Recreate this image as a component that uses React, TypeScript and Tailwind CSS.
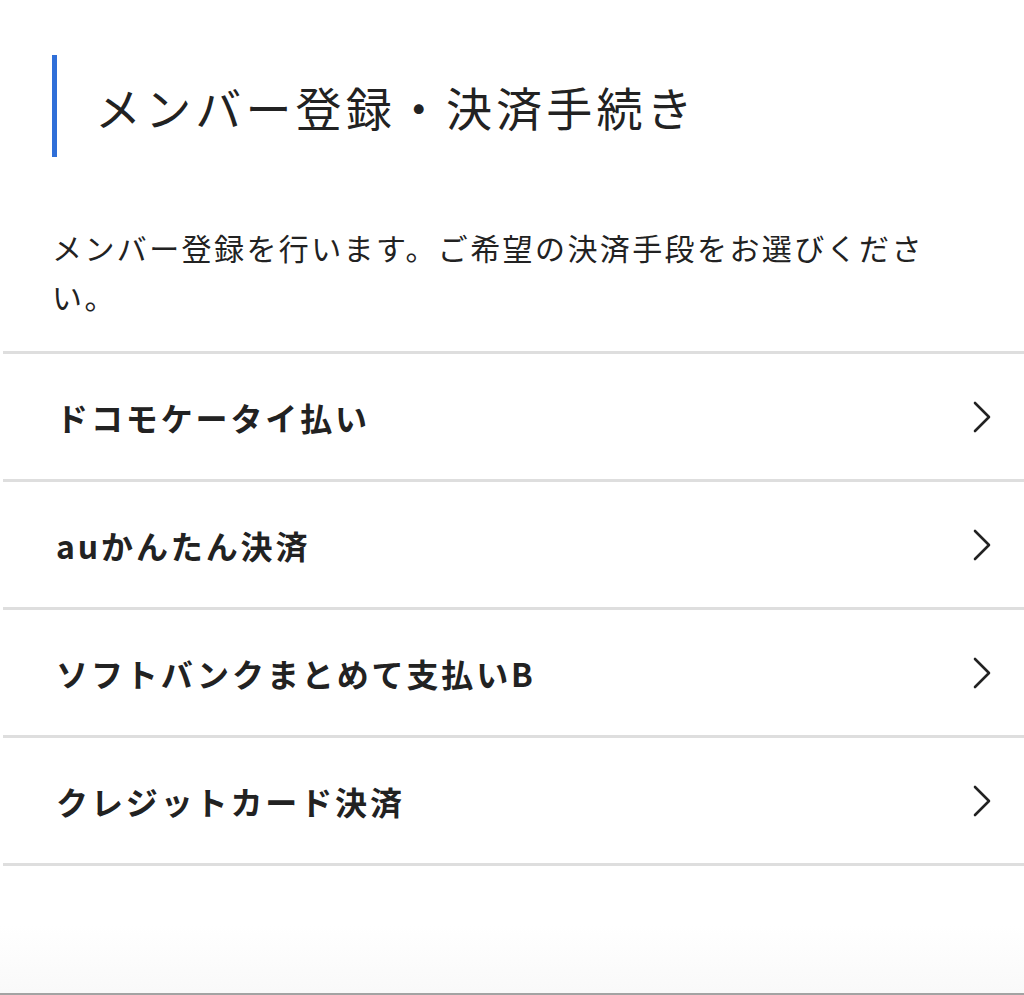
const methods = [
  "ドコモケータイ払い",
  "auかんたん決済",
  "ソフトバンクまとめて支払いB",
  "クレジットカード決済",
];

const font = {
  fontFamily: '"Noto Sans CJK JP", "Noto Sans", sans-serif',
};

const Chevron = () => (
  <svg width="20" height="34" viewBox="0 0 20 34" fill="none">
    <polyline
      points="3,3 17,17 3,31"
      stroke="#222"
      strokeWidth="2.6"
      strokeLinecap="round"
      strokeLinejoin="round"
    />
  </svg>
);

const App = () => {
  return (
    <div
      className="flex h-[995px] w-[1024px] flex-col overflow-hidden bg-white text-[#222]"
      style={font}
    >
      {/* heading */}
      <div className="ml-[52px] mt-[55px] flex h-[102px] items-center border-l-[5px] border-[#2f6fd8] pl-[38px]">
        <h1 className="text-[46px] leading-none tracking-[0.09em]">
          メンバー登録・決済手続き
        </h1>
      </div>

      <p className="ml-[52px] mt-[66px] w-[890px] text-[30px] leading-[49px] tracking-[0.08em]">
        メンバー登録を行います。ご希望の決済手段をお選びください。
      </p>

      <ul className="ml-[3px] mt-[30px] border-b-[3px] border-[#dedede]">
        {methods.map((m) => (
          <li
            key={m}
            className="flex h-[128px] items-center justify-between border-t-[3px] border-[#dedede] pl-[53px] pr-[32px] hover:cursor-pointer"
          >
            <span className="text-[32px] font-bold tracking-[0.09em]">
              {m}
            </span>
            <Chevron />
          </li>
        ))}
      </ul>

      <div className="flex-1" />
      <div className="h-[70px] border-b-[2px] border-[#a3a3a3] bg-gradient-to-b from-white to-[#f9f9f9]" />
    </div>
  );
};

export default App;
